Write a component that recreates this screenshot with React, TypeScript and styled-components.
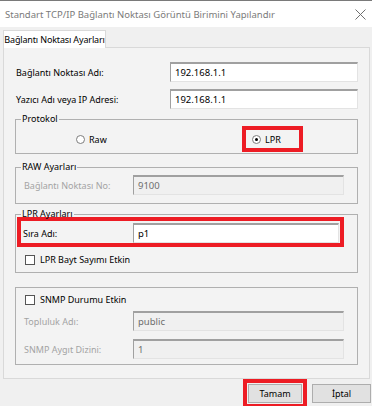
import React from "react";
import styled, { createGlobalStyle } from "styled-components";

const RED = "#ed1c24";

const GlobalStyle = createGlobalStyle`
  html, body {
    margin: 0;
    padding: 0;
    background: #f0f0f0;
  }
  body {
    font-family: "Noto Sans", "Segoe UI", sans-serif;
    font-size: 9px;
    color: #000;
  }
`;

const Window = styled.div`
  width: 372px;
  height: 406px;
  box-sizing: border-box;
  background: #f0f0f0;
  border-top: 1px solid #7a7a7a;
  display: flex;
  flex-direction: column;
  overflow: hidden;
`;

const TitleBar = styled.div`
  height: 26px;
  flex: none;
  background: #fff;
  display: flex;
  align-items: center;
  justify-content: space-between;
  padding: 0 6px 0 5px;
  color: #7a7a7a;
  font-size: 9.5px;
`;

const TabStrip = styled.div`
  display: flex;
  padding: 3px 0 0 3px;
`;

const Tab = styled.div`
  width: 103px;
  height: 18px;
  box-sizing: border-box;
  background: #fff;
  border: 1px solid #d9d9d9;
  border-bottom: none;
  margin-bottom: -1px;
  position: relative;
  z-index: 1;
  display: flex;
  align-items: center;
  justify-content: center;
  white-space: nowrap;
  letter-spacing: -0.15px;
`;

const TabPanel = styled.div`
  margin: 0 2px 0 3px;
  height: 332px;
  flex: none;
  box-sizing: border-box;
  border: 1px solid #d9d9d9;
  background: #f3f3f3;
  padding: 14px 11px 0 11px;
  display: flex;
  flex-direction: column;
`;

const FieldRow = styled.div<{ $labelWidth: number; $gap?: number }>`
  display: grid;
  grid-template-columns: ${(p) => p.$labelWidth}px 1fr;
  align-items: center;
  margin-top: ${(p) => p.$gap ?? 0}px;
`;

const Label = styled.span<{ $disabled?: boolean; $inset?: number }>`
  color: ${(p) => (p.$disabled ? "#a3a3a3" : "#000")};
  padding-left: ${(p) => p.$inset ?? 0}px;
  white-space: nowrap;
`;

const TextBox = styled.div<{ $disabled?: boolean }>`
  height: 20px;
  box-sizing: border-box;
  background: ${(p) => (p.$disabled ? "#f0f0f0" : "#fff")};
  color: ${(p) => (p.$disabled ? "#6d6d6d" : "#000")};
  border-top: 2px solid #a0a0a0;
  border-left: 1px solid #a0a0a0;
  border-right: 1px solid #e3e3e3;
  border-bottom: 1px solid #e3e3e3;
  padding: 0 4px;
  display: flex;
  align-items: center;
  font-size: 9.5px;
`;

const Group = styled.fieldset<{ $top: number; $padTop?: number; $padBottom?: number }>`
  margin: ${(p) => p.$top}px 0 0 0;
  padding: ${(p) => p.$padTop ?? 0}px 13px ${(p) => p.$padBottom ?? 0}px 8px;
  border: 1px solid #b0b0b0;
  min-width: 0;
`;

const Legend = styled.legend`
  padding: 0 1px;
  margin-left: -3px;
  line-height: 14px;
  height: 14px;
`;

const ProtocolRow = styled.div`
  display: grid;
  grid-template-columns: 166px 61px;
  padding-left: 52px;
  align-items: center;
  height: 26px;
`;

const Highlight = styled.div<{ $pad: string }>`
  border: 4px solid ${RED};
  padding: ${(p) => p.$pad};
  box-sizing: border-box;
`;

const HighlightRow = styled(Highlight)`
  margin: -4px 0 0 -7px;
  display: grid;
  grid-template-columns: 110px 1fr;
  align-items: center;
`;

const Option = styled.label<{ $height?: number }>`
  display: flex;
  align-items: center;
  gap: 4px;
  white-space: nowrap;
  height: ${(p) => (p.$height ? `${p.$height}px` : "auto")};
`;

const RadioDot = styled.span<{ $checked?: boolean }>`
  width: 9px;
  height: 9px;
  box-sizing: border-box;
  border-radius: 50%;
  border: 1px solid #7d7d7d;
  background: #fff;
  display: flex;
  align-items: center;
  justify-content: center;
  &::after {
    content: "";
    width: 3px;
    height: 3px;
    border-radius: 50%;
    background: ${(p) => (p.$checked ? "#000" : "transparent")};
  }
`;

const CheckBox = styled.span`
  width: 10px;
  height: 10px;
  box-sizing: border-box;
  border: 1px solid #555;
  background: #fff;
  flex: none;
`;

const CheckRow = styled(Option)<{ $gap: number }>`
  margin-top: ${(p) => p.$gap}px;
  height: 13px;
  padding-left: 1px;
  gap: 5px;
`;

const Footer = styled.div`
  display: flex;
  justify-content: flex-end;
  align-items: flex-start;
  gap: 5px;
  padding-right: 1px;
`;

const Button = styled.button<{ $width: number }>`
  width: ${(p) => p.$width}px;
  height: 19px;
  box-sizing: border-box;
  background: #e1e1e1;
  border: 1px solid #adadad;
  font: inherit;
  color: #000;
  padding: 0;
  display: block;
`;

const ButtonSlot = styled.div`
  padding-top: 5px;
`;

const CloseIcon = () => (
  <svg width="11" height="11" viewBox="0 0 11 11">
    <path d="M0.5 0.5 L10.5 10.5 M10.5 0.5 L0.5 10.5" stroke="#6f6f6f" strokeWidth="1" fill="none" />
  </svg>
);

export default function App() {
  return (
    <>
      <GlobalStyle />
      <Window>
        <TitleBar>
          <span>Standart TCP/IP Bağlantı Noktası Görüntü Birimini Yapılandır</span>
          <CloseIcon />
        </TitleBar>

        <TabStrip>
          <Tab>Bağlantı Noktası Ayarları</Tab>
        </TabStrip>

        <TabPanel>
          <FieldRow $labelWidth={155}>
            <Label $inset={1}>Bağlantı Noktası Adı:</Label>
            <TextBox>192.168.1.1</TextBox>
          </FieldRow>
          <FieldRow $labelWidth={155} $gap={7}>
            <Label $inset={1}>Yazıcı Adı veya IP Adresi:</Label>
            <TextBox>192.168.1.1</TextBox>
          </FieldRow>

          <Group $top={3} $padBottom={1}>
            <Legend>Protokol</Legend>
            <ProtocolRow>
              <Option>
                <RadioDot />
                Raw
              </Option>
              <Highlight $pad="0 0 0 6px">
                <Option $height={18}>
                  <RadioDot $checked />
                  LPR
                </Option>
              </Highlight>
            </ProtocolRow>
          </Group>

          <Group $top={6} $padTop={1} $padBottom={8}>
            <Legend>RAW Ayarları</Legend>
            <FieldRow $labelWidth={109}>
              <Label $disabled>Bağlantı Noktası No:</Label>
              <TextBox $disabled>9100</TextBox>
            </FieldRow>
          </Group>

          <Group $top={3} $padBottom={6}>
            <Legend>LPR Ayarları</Legend>
            <HighlightRow $pad="2px 1px 0 2px">
              <Label>Sıra Adı:</Label>
              <TextBox>p1</TextBox>
            </HighlightRow>
            <CheckRow $gap={6}>
              <CheckBox />
              LPR Bayt Sayımı Etkin
            </CheckRow>
          </Group>

          <Group $top={14} $padTop={5} $padBottom={5}>
            <CheckRow $gap={0}>
              <CheckBox />
              SNMP Durumu Etkin
            </CheckRow>
            <FieldRow $labelWidth={109} $gap={5}>
              <Label $disabled>Topluluk Adı:</Label>
              <TextBox $disabled>public</TextBox>
            </FieldRow>
            <FieldRow $labelWidth={109} $gap={8}>
              <Label $disabled>SNMP Aygıt Dizini:</Label>
              <TextBox $disabled>1</TextBox>
            </FieldRow>
          </Group>
        </TabPanel>

        <Footer>
          <Highlight $pad="1px">
            <Button $width={54}>Tamam</Button>
          </Highlight>
          <ButtonSlot>
            <Button $width={59}>İptal</Button>
          </ButtonSlot>
        </Footer>
      </Window>
    </>
  );
}
